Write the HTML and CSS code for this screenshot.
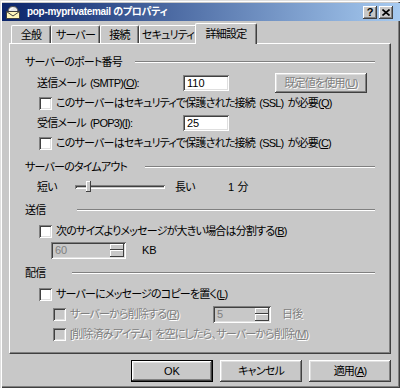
FILE: index.html
```html
<!DOCTYPE html>
<html lang="ja">
<head>
  <meta charset="UTF-8">
  <title>pop-myprivatemail のプロパティ</title>
  <link rel="stylesheet" href="styles.css">
</head>
<body>
  <div class="window">
    <div class="titlebar">
      <svg class="app-icon" width="16" height="16" viewBox="0 0 16 16">
        <path d="M3 8 Q3 2.5 8 2.5 Q13 2.5 13 8 Z" fill="#e8e8e8" stroke="#505050" stroke-width="1"/>
        <path d="M5 6 Q6 4 8 4" fill="none" stroke="#fff" stroke-width="1"/>
        <rect x="1.5" y="7.5" width="13" height="7" fill="#fff6b8" stroke="#404040"/>
        <path d="M1.5 7.5 L8 12 L14.5 7.5" fill="none" stroke="#404040"/>
      </svg>
      <span class="title">pop-myprivatemail のプロパティ</span>
      <div class="title-buttons">
        <span class="tbtn help">?</span>
        <span class="tbtn">
          <svg width="8" height="7" viewBox="0 0 8 7"><path d="M0.5 0.5 L7.5 6.5 M7.5 0.5 L0.5 6.5" stroke="#000" stroke-width="1.6"/></svg>
        </span>
      </div>
    </div>

    <div class="content">
      <div class="tabs">
        <div class="tab tab-general">全般</div>
        <div class="tab tab-server">サーバー</div>
        <div class="tab tab-connect">接続</div>
        <div class="tab tab-security">セキュリティ</div>
        <div class="tab active">詳細設定</div>
      </div>

      <div class="panel">
        <section class="group">
          <div class="group-title"><span class="title-port">サーバーのポート番号</span><i class="etch"></i></div>
          <div class="group-body">
            <div class="row">
              <span class="port-label">送信メール (SMTP)(<u>O</u>):</span>
              <span class="field port">110</span>
              <span class="button disabled default-btn">既定値を使用(<u>U</u>)</span>
            </div>
            <div class="row">
              <span class="check"></span>
              <span>このサーバーはセキュリティで保護された接続 (SSL) が必要(<u>Q</u>)</span>
            </div>
            <div class="row">
              <span class="port-label">受信メール (POP3)(<u>I</u>):</span>
              <span class="field port">25</span>
            </div>
            <div class="row">
              <span class="check"></span>
              <span>このサーバーはセキュリティで保護された接続 (SSL) が必要(<u>C</u>)</span>
            </div>
          </div>
        </section>

        <section class="group">
          <div class="group-title"><span class="title-timeout">サーバーのタイムアウト</span><i class="etch"></i></div>
          <div class="group-body">
            <div class="row slider-row">
              <span class="short-label">短い</span>
              <span class="slider"><span class="track"></span><span class="thumb"></span></span>
              <span class="long-label">長い</span>
              <span>1 分</span>
            </div>
          </div>
        </section>

        <section class="group">
          <div class="group-title"><span class="title-send">送信</span><i class="etch"></i></div>
          <div class="group-body">
            <div class="row">
              <span class="check"></span>
              <span>次のサイズよりメッセージが大きい場合は分割する(<u>B</u>)</span>
            </div>
            <div class="row spin-row indent">
              <span class="spin size-spin">
                <span class="spin-value">60</span>
                <span class="spin-btns"><i class="up"></i><i class="down"></i></span>
              </span>
              <span class="unit">KB</span>
            </div>
          </div>
        </section>

        <section class="group">
          <div class="group-title"><span class="title-deliver">配信</span><i class="etch"></i></div>
          <div class="group-body">
            <div class="row">
              <span class="check"></span>
              <span>サーバーにメッセージのコピーを置く(<u>L</u>)</span>
            </div>
            <div class="row indent disabled-text">
              <span class="check off"></span>
              <span class="delete-label">サーバーから削除する(<u>R</u>)</span>
              <span class="spin days-spin">
                <span class="spin-value">5</span>
                <span class="spin-btns"><i class="up"></i><i class="down"></i></span>
              </span>
              <span class="unit-days">日後</span>
            </div>
            <div class="row indent disabled-text">
              <span class="check off"></span>
              <span>[削除済みアイテム] を空にしたら、サーバーから削除(<u>M</u>)</span>
            </div>
          </div>
        </section>
      </div>

      <div class="footer">
        <span class="button default">OK</span>
        <span class="button">キャンセル</span>
        <span class="button">適用(<u>A</u>)</span>
      </div>
    </div>
  </div>
</body>
</html>
```

FILE: styles.css
```css
* {
  box-sizing: border-box;
}

body {
  margin: 0;
  background: #c8c8c8;
  color: #000;
  font-family: "Liberation Sans", "Noto Sans CJK JP", sans-serif;
  font-size: 11px;
  font-feature-settings: "palt";
  letter-spacing: -0.8px;
  word-spacing: 2px;
  line-height: 1;
}

u {
  text-decoration: underline;
  text-underline-offset: 1px;
}

.window {
  width: 400px;
  height: 388px;
  padding: 3px 0 0 2px;
  background: #c8c8c8;
  box-shadow: inset 1px 1px #dfdfdf, inset 2px 2px #fff, inset -1px -1px #404040, inset -2px -2px #808080;
  overflow: hidden;
}

/* title bar */
.titlebar {
  height: 18px;
  display: flex;
  align-items: center;
  padding: 0 7px 0 3px;
  background: linear-gradient(to right, #0a246a, #a6caf0);
  color: #fff;
}

.app-icon {
  flex: none;
}

.title {
  margin-left: 6px;
  font-size: 10px;
  font-weight: bold;
  letter-spacing: -0.3px;
  word-spacing: 0;
  white-space: nowrap;
}

.title-buttons {
  margin-left: auto;
  display: flex;
  gap: 2px;
}

.tbtn {
  width: 14px;
  height: 13px;
  display: flex;
  align-items: center;
  justify-content: center;
  background: #c8c8c8;
  color: #000;
  box-shadow: inset -1px -1px #404040, inset 1px 1px #fff, inset -2px -2px #808080;
}

.tbtn.help {
  font-weight: bold;
  font-size: 11px;
  letter-spacing: 0;
}

/* tabs */
.content {
  padding: 2px 9px 0 7px;
}

.tabs {
  height: 20px;
  display: flex;
  align-items: flex-end;
  padding-left: 2px;
}

.tab {
  height: 18px;
  display: flex;
  align-items: center;
  justify-content: center;
  white-space: nowrap;
  border-top: 1px solid #fff;
  border-left: 1px solid #fff;
  border-right: 1px solid #404040;
  border-radius: 2px 2px 0 0;
  box-shadow: inset -1px 0 #808080;
  padding-top: 1px;
}

.tab-general { width: 40px; }
.tab-server { width: 49px; }
.tab-connect { width: 39px; }
.tab-security { width: 58px; }

.tab.active {
  position: relative;
  z-index: 1;
  width: 62px;
  height: 21px;
  margin-left: -2px;
  margin-bottom: -1px;
  background: #c8c8c8;
  padding-top: 0;
}

.panel {
  height: 311px;
  padding: 10px 15px 0 15px;
  border: 1px solid;
  border-color: #fff #404040 #404040 #fff;
  box-shadow: inset -1px -1px #808080;
}

/* groups */
.group + .group {
  margin-top: 6px;
}

.group-title {
  height: 16px;
  display: flex;
  align-items: center;
  white-space: nowrap;
}

.group-title span {
  flex: none;
}

.title-port { width: 110px; }
.title-timeout { width: 120px; }
.title-send { width: 52px; }
.title-deliver { width: 47px; }

.etch {
  flex: 1;
  height: 2px;
  border-top: 1px solid #808080;
  border-bottom: 1px solid #fff;
  margin-top: -1px;
}

.group-body {
  padding: 3px 0 0 12px;
}

.row {
  height: 20px;
  display: flex;
  align-items: center;
  white-space: nowrap;
}

.indent {
  padding-left: 14px;
}

.check {
  flex: none;
  width: 13px;
  height: 13px;
  margin: 0 4px 0 2px;
  background: #fff;
  box-shadow: inset 1px 1px #808080, inset -1px -1px #fff, inset 2px 2px #404040, inset -2px -2px #dfdfdf;
}

.check.off {
  background: #c8c8c8;
}

.disabled-text,
.button.disabled {
  color: #808080;
  text-shadow: 1px 1px 0 #fff;
}

/* fields */
.port-label {
  width: 146px;
}

.field {
  height: 16px;
  display: flex;
  align-items: center;
  padding: 1px 0 0 4px;
  background: #fff;
  box-shadow: inset 1px 1px #808080, inset -1px -1px #fff, inset 2px 2px #404040, inset -2px -2px #dfdfdf;
  letter-spacing: 0;
}

.port {
  width: 46px;
}

.button {
  height: 22px;
  width: 82px;
  display: flex;
  align-items: center;
  justify-content: center;
  background: #c8c8c8;
  box-shadow: inset -1px -1px #404040, inset 1px 1px #fff, inset -2px -2px #808080, inset 2px 2px #dfdfdf;
}

.default-btn {
  width: 92px;
  height: 20px;
  margin-left: 46px;
}

/* slider */
.slider-row {
  height: 18px;
}

.short-label {
  width: 38px;
}

.slider {
  position: relative;
  width: 90px;
  height: 12px;
  display: flex;
  align-items: center;
}

.track {
  width: 100%;
  height: 4px;
  box-shadow: inset 1px 1px #808080, inset -1px -1px #fff, inset 2px 2px #404040;
}

.thumb {
  position: absolute;
  left: 11px;
  top: 0;
  width: 5px;
  height: 11px;
  background: #c8c8c8;
  box-shadow: inset -1px -1px #404040, inset 1px 1px #fff;
}

.long-label {
  width: 53px;
  margin-left: 10px;
}

/* spin boxes */
.spin-row {
  height: 18px;
}

.spin {
  height: 17px;
  display: flex;
  padding: 2px;
  background: #c8c8c8;
  box-shadow: inset 1px 1px #808080, inset -1px -1px #fff, inset 2px 2px #404040, inset -2px -2px #dfdfdf;
}

.size-spin { width: 75px; }
.days-spin { width: 58px; }

.spin-value {
  flex: 1;
  padding: 1px 0 0 2px;
  color: #808080;
  letter-spacing: 0;
  text-shadow: none;
}

.spin-btns {
  width: 14px;
  display: flex;
  flex-direction: column;
}

.spin-btns i {
  flex: 1;
  background: #c8c8c8;
  box-shadow: inset -1px -1px #404040, inset 1px 1px #fff;
}

.unit {
  margin-left: 16px;
  letter-spacing: 0;
}

.delete-label {
  width: 143px;
}

.unit-days {
  margin-left: 11px;
}

/* footer */
.footer {
  margin-top: 6px;
  display: flex;
  justify-content: flex-end;
  gap: 7px;
}

.button.default {
  border: 1px solid #000;
  letter-spacing: 0;
}
```
